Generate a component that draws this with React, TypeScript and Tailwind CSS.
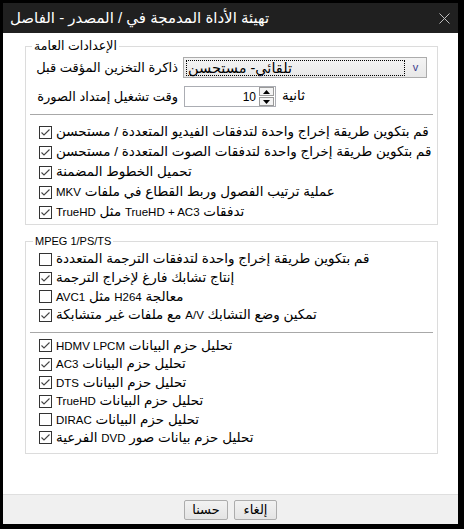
import React from "react";

const FONT = { fontFamily: '"Liberation Sans", "DejaVu Sans", sans-serif' };

// Latin runs are set smaller than the Arabic so the widths come out like the original
function Mixed({ text }: { text: string }) {
	const parts = text.split(/([A-Za-z0-9][A-Za-z0-9 /+]*[A-Za-z0-9])/);
	return (
		<>
			{parts.map((p, i) =>
				i % 2 === 1 ? (
					<span key={i} className="text-[11.5px]">
						{p}
					</span>
				) : (
					<React.Fragment key={i}>{p}</React.Fragment>
				),
			)}
		</>
	);
}

function Check({ checked }: { checked: boolean }) {
	return (
		<svg width="13" height="13" viewBox="0 0 13 13" className="shrink-0">
			<rect x="0.5" y="0.5" width="12" height="12" fill="#fff" stroke="#333" />
			{checked && (
				<polyline
					points="2.5,6.5 5,9 10.5,3.5"
					fill="none"
					stroke="#444"
					strokeWidth="1.1"
				/>
			)}
		</svg>
	);
}

function Row({
	label,
	checked,
	h,
}: {
	label: string;
	checked: boolean;
	h: string;
}) {
	return (
		<div className={`flex items-center gap-[4px] pl-[13px] ${h}`}>
			<Check checked={checked} />
			<span dir="rtl" className="text-[13.5px] leading-[16px] text-black whitespace-nowrap">
				<Mixed text={label} />
			</span>
		</div>
	);
}

const general = [
	{ label: "قم بتكوين طريقة إخراج واحدة لتدفقات الفيديو المتعددة / مستحسن", checked: true },
	{ label: "قم بتكوين طريقة إخراج واحدة لتدفقات الصوت المتعددة / مستحسن", checked: true },
	{ label: "تحميل الخطوط المضمنة", checked: true },
	{ label: "عملية ترتيب الفصول وربط القطاع في ملفات MKV", checked: true },
	{ label: "تدفقات TrueHD + AC3 مثل TrueHD", checked: true },
];

const mpeg = [
	{ label: "قم بتكوين طريقة إخراج واحدة لتدفقات الترجمة المتعددة", checked: false },
	{ label: "إنتاج تشابك فارغ لإخراج الترجمة", checked: true },
	{ label: "معالجة H264 مثل AVC1", checked: false },
	{ label: "تمكين وضع التشابك A/V مع ملفات غير متشابكة", checked: true },
];

const parsers = [
	{ label: "تحليل حزم البيانات HDMV LPCM", checked: true },
	{ label: "تحليل حزم البيانات AC3", checked: true },
	{ label: "تحليل حزم البيانات DTS", checked: true },
	{ label: "تحليل حزم البيانات TrueHD", checked: true },
	{ label: "تحليل حزم البيانات DIRAC", checked: false },
	{ label: "تحليل حزم بيانات صور DVD الفرعية", checked: true },
];

export default function App() {
	return (
		<div
			className="w-[464px] h-[529px] bg-black pt-[3px] pl-[3px] pr-[6px] pb-[5px]"
			style={FONT}
		>
			<div className="flex flex-col h-full">
				{/* Title bar */}
				<div className="h-[30px] bg-[#202020] flex items-center justify-between pl-[7px] pr-[8px]">
					<span dir="rtl" className="text-[15px] text-white whitespace-nowrap">
						تهيئة الأداة المدمجة في / المصدر - الفاصل
					</span>
					<svg width="11" height="11" viewBox="0 0 11 11">
						<path d="M0.5 0.5 L10.5 10.5 M10.5 0.5 L0.5 10.5" stroke="#bdbdbd" strokeWidth="1" />
					</svg>
				</div>

				{/* Content */}
				<div className="flex-1 bg-white pt-[6px] pl-[22px] pr-[20px]">
					<fieldset className="border border-[#dcdcdc] px-0 pb-[2px]">
						<legend className="ml-[6px] px-[2px] text-[12.5px] leading-[14px] text-black">
							الإعدادات العامة
						</legend>
						<div className="flex items-center mt-[4px] h-[21px]">
							<div dir="rtl" className="w-[152px] pl-[2px] text-[13px] text-black whitespace-nowrap">
								ذاكرة التخزين المؤقت قبل
							</div>
							<div className="ml-[5px] w-[244px] h-[21px] border border-[#acacac] bg-gradient-to-b from-[#f4f4f4] to-[#e8e8e8] flex items-center pl-[2px]">
								<div className="w-[219px] h-[16px] border border-dotted border-black flex items-center pl-[1px]">
									<span dir="rtl" className="text-[14.5px] leading-[14px] text-black whitespace-nowrap">
										تلقائي- مستحسن
									</span>
								</div>
								<span className="flex-1 text-center text-[11px] text-[#3b3b8c]">v</span>
							</div>
						</div>
						<div className="flex items-center mt-[8px] h-[21px]">
							<div dir="rtl" className="w-[152px] pl-[2px] text-[13px] text-black whitespace-nowrap">
								وقت تشغيل إمتداد الصورة
							</div>
							<div className="ml-[6px] w-[92px] h-[21px] border border-[#abadb3] bg-white flex items-center">
								<span className="flex-1 text-right pr-[3px] text-[12px] text-black">10</span>
								<div className="w-[15px] h-[19px] flex flex-col gap-[1px] mr-[1px]">
									<div className="flex-1 border border-[#9a9a9a] bg-[#f4f4f4] flex items-center justify-center">
										<svg width="7" height="4" viewBox="0 0 7 4">
											<path d="M0 4 L3.5 0 L7 4 Z" fill="#000" />
										</svg>
									</div>
									<div className="flex-1 border border-[#9a9a9a] bg-[#f4f4f4] flex items-center justify-center">
										<svg width="7" height="4" viewBox="0 0 7 4">
											<path d="M0 0 L3.5 4 L7 0 Z" fill="#000" />
										</svg>
									</div>
								</div>
							</div>
							<span dir="rtl" className="ml-[6px] text-[13.5px] text-black">
								ثانية
							</span>
						</div>
						<div className="mt-[7px] mx-[4px] border-t border-[#a8a8a8]" />
						<div className="mt-[7px]">
							{general.map((r) => (
								<Row key={r.label} label={r.label} checked={r.checked} h="h-[20px]" />
							))}
						</div>
					</fieldset>

					<fieldset className="mt-[9px] border border-[#dcdcdc] px-0 pb-[6px]">
						<legend className="ml-[7px] px-[2px] text-[11px] leading-[14px] text-black">
							MPEG 1/PS/TS
						</legend>
						<div className="mt-[2px]">
							{mpeg.map((r) => (
								<Row key={r.label} label={r.label} checked={r.checked} h="h-[18.7px]" />
							))}
						</div>
						<div className="mt-[7px] mx-[4px] border-t border-[#a8a8a8]" />
						<div className="mt-[4px]">
							{parsers.map((r) => (
								<Row key={r.label} label={r.label} checked={r.checked} h="h-[18.4px]" />
							))}
						</div>
					</fieldset>
				</div>

				{/* Footer */}
				<div className="h-[30px] bg-[#f0f0f0] border-t border-[#dfdfdf] flex items-center justify-center gap-[6px]">
					<button className="w-[44px] h-[20px] rounded-[2px] border border-[#acacac] bg-gradient-to-b from-[#f2f2f2] to-[#e4e4e4] text-[13px] leading-[16px] text-black">
						حسنا
					</button>
					<button className="w-[43px] h-[20px] rounded-[2px] border border-[#acacac] bg-gradient-to-b from-[#f2f2f2] to-[#e4e4e4] text-[13px] leading-[16px] text-black">
						إلغاء
					</button>
				</div>
			</div>
		</div>
	);
}
